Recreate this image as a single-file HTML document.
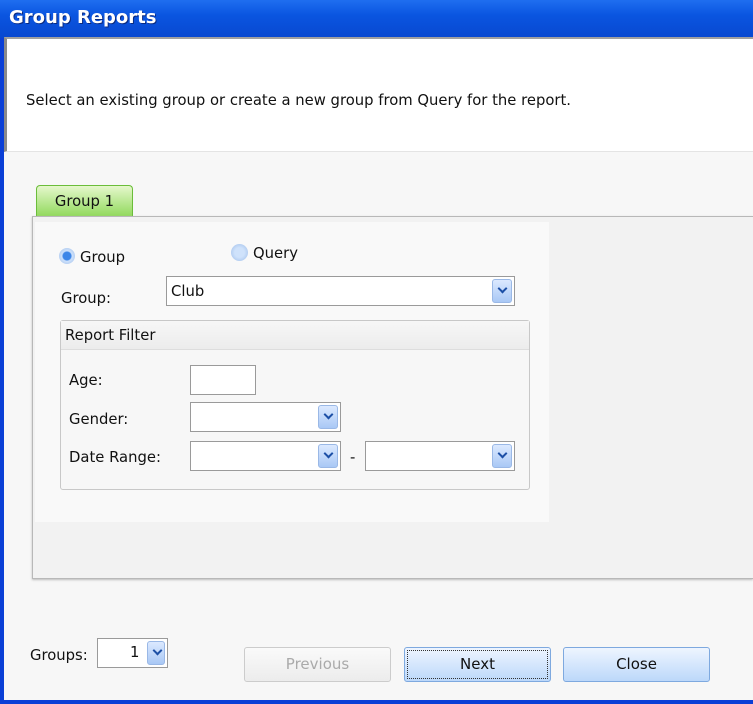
<!DOCTYPE html><html><head><style>
*{box-sizing:border-box;margin:0;padding:0}
body{width:753px;height:704px;overflow:hidden;font-family:"DejaVu Sans","Liberation Sans",sans-serif;font-size:14.8px;color:#111;background:#0a3fd6;position:relative}
.a{position:absolute}
.dd{position:absolute;background:#fff;border:1px solid #9a9a9a}
.arr{position:absolute;right:2px;top:2px;width:20px;bottom:2px;border-radius:3px;background:linear-gradient(#dbe9ff,#a9c8f5);border:1px solid #9ab8e6}
.arr:after{content:"";position:absolute;left:6px;top:5px;width:5px;height:5px;border-right:2px solid #1c4fa6;border-bottom:2px solid #1c4fa6;transform:rotate(45deg)}
.btn{position:absolute;top:647px;height:35px;width:147px;border-radius:3px;text-align:center;line-height:33px;font-size:15px}
</style></head><body>
<div class="a" style="left:0;top:0;width:753px;height:38px;background:linear-gradient(#1f6ef0,#0a55e0 40%,#0848d0);"></div>
<div class="a" style="left:9px;top:7px;color:#fff;font-weight:bold;font-size:18px;text-shadow:1px 1px #0a2a80">Group Reports</div>
<div class="a" style="left:4px;top:37px;width:749px;height:663px;background:#f7f7f7"></div>
<div class="a" style="left:4px;top:37px;width:749px;height:115px;background:#fff;border-left:3px solid #8a8a8a;border-top:2px solid #a0a0a0;border-bottom:1px solid #e4e4e4"></div>
<div class="a" style="left:26px;top:92px">Select an existing group or create a new group from Query for the report.</div>
<div class="a" style="left:36px;top:185px;width:97px;height:32px;border:1px solid #6bbd3a;border-bottom:none;border-radius:4px 4px 0 0;background:linear-gradient(#e5f8cc,#8fd85a);text-align:center;line-height:31px">Group 1</div>
<div class="a" style="left:32px;top:216px;width:721px;height:363px;border:1px solid #b8b8b8;border-right:none;background:#f2f2f2;box-shadow:0 1px 2px #bbb"></div>
<div class="a" style="left:35px;top:222px;width:514px;height:300px;background:#f9f9f9"></div>
<div class="a" style="left:59px;top:248px;width:16px;height:16px;border-radius:50%;background:radial-gradient(#3c86e8 35%,#cfe2fb 45%,#9cbce8)"></div>
<div class="a" style="left:80px;top:249px">Group</div>
<div class="a" style="left:231px;top:244px;width:17px;height:17px;border-radius:50%;background:radial-gradient(#cfe2fb 40%,#9cbce8)"></div>
<div class="a" style="left:253px;top:245px">Query</div>
<div class="a" style="left:61px;top:290px">Group:</div>
<div class="dd" style="left:166px;top:276px;width:349px;height:30px"><span class="a" style="left:4px;top:6px">Club</span><div class="arr"></div></div>
<div class="a" style="left:60px;top:320px;width:470px;height:170px;border:1px solid #c8c8c8;border-radius:3px;background:#f7f7f7"></div>
<div class="a" style="left:61px;top:321px;width:468px;height:29px;background:linear-gradient(#f7f7f7,#ececec);border-bottom:1px solid #ddd"></div>
<div class="a" style="left:65px;top:327px">Report Filter</div>
<div class="a" style="left:69px;top:372px">Age:</div>
<div class="dd" style="left:190px;top:365px;width:66px;height:30px"></div>
<div class="a" style="left:69px;top:411px">Gender:</div>
<div class="dd" style="left:190px;top:402px;width:151px;height:30px"><div class="arr"></div></div>
<div class="a" style="left:69px;top:449px">Date Range:</div>
<div class="dd" style="left:190px;top:441px;width:151px;height:30px"><div class="arr"></div></div>
<div class="a" style="left:350px;top:449px">-</div>
<div class="dd" style="left:365px;top:441px;width:150px;height:30px"><div class="arr"></div></div>
<div class="a" style="left:30px;top:647px">Groups:</div>
<div class="dd" style="left:97px;top:638px;width:71px;height:30px"><span class="a" style="left:32px;top:5px">1</span><div class="arr" style="width:18px"></div></div>
<div class="btn" style="left:244px;border:1px solid #ccc;background:linear-gradient(#fafafa,#ececec);color:#aaa">Previous</div>
<div class="btn" style="left:404px;border:1px solid #7ea9df;background:linear-gradient(#eef5ff,#bcd8fa);outline:1px dotted #333;outline-offset:-4px">Next</div>
<div class="btn" style="left:563px;border:1px solid #7ea9df;background:linear-gradient(#eef5ff,#bcd8fa)">Close</div>
</body></html>
